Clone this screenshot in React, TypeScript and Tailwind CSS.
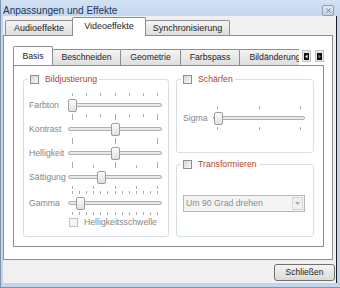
import React from "react";

function Checkbox({ disabled = false }: { disabled?: boolean }) {
  return (
    <span
      className={
        disabled
          ? "block h-[9px] w-[9px] shrink-0 border border-[#c2c2c2] bg-[#f7f7f7]"
          : "block h-[9px] w-[9px] shrink-0 border border-[#8e8f8f] bg-gradient-to-br from-[#d6d6d6] to-[#fafafa]"
      }
    />
  );
}

function Slider({
  widthClass,
  width,
  ticks,
  pos,
}: {
  widthClass: string;
  width: number;
  ticks: number;
  pos: number;
}) {
  const xs = Array.from({ length: ticks }, (_, i) =>
    Math.round(4 + ((width - 9) * i) / (ticks - 1))
  );
  return (
    <div className={`relative h-[24px] shrink-0 ${widthClass}`}>
      {xs.map((x, i) => (
        <span
          key={`a${i}`}
          className="absolute top-0 h-[3px] w-px bg-[#ababab]"
          style={{ left: x }}
        />
      ))}
      {xs.map((x, i) => (
        <span
          key={`b${i}`}
          className="absolute bottom-0 h-[3px] w-px bg-[#ababab]"
          style={{ left: x }}
        />
      ))}
      <div className="absolute left-0 right-0 top-[10px] h-[4px] rounded-full border border-[#b0b0b0] bg-[#e9e9e9]" />
      <div
        className="absolute top-[6px] h-[13px] w-[9px] rounded-[2px] border border-[#9c9c9c] bg-gradient-to-b from-[#fcfcfc] to-[#e1e1e1]"
        style={{ left: pos }}
      />
    </div>
  );
}

function Group({
  title,
  className,
  children,
}: {
  title: string;
  className: string;
  children?: React.ReactNode;
}) {
  return (
    <div className={`flex flex-col rounded-[3px] border border-[#d5dfe5] ${className}`}>
      <div className="-mt-[5px] ml-[4px] flex h-[9px] items-center gap-[6px] self-start bg-white px-[2px]">
        <Checkbox />
        <span className="text-[8.7px] leading-none text-[#b2432c]">{title}</span>
      </div>
      {children}
    </div>
  );
}

function SliderRow({
  label,
  ticks,
  pos,
  extra = "",
}: {
  label: string;
  ticks: number;
  pos: number;
  extra?: string;
}) {
  return (
    <div className={`flex h-[24px] items-center ${extra}`}>
      <span className="w-[39px] shrink-0 whitespace-nowrap text-[8.7px] leading-none text-[#868686]">
        {label}
      </span>
      <Slider widthClass="w-[94px]" width={94} ticks={ticks} pos={pos} />
    </div>
  );
}

function OuterTab({
  label,
  selected = false,
  className,
}: {
  label: string;
  selected?: boolean;
  className: string;
}) {
  return (
    <div
      className={
        selected
          ? `relative z-10 -mb-px flex h-[19px] items-center justify-center rounded-t-[2px] border border-b-0 border-[#8c8e94] bg-white pb-[1px] text-[9px] leading-none text-[#1e1e1e] ${className}`
          : `flex h-[15px] items-center justify-center rounded-t-[2px] border border-b-0 border-[#8c8e94] bg-gradient-to-b from-[#f4f4f4] to-[#dedede] text-[9px] leading-none text-[#1e1e1e] ${className}`
      }
    >
      {label}
    </div>
  );
}

function InnerTab({
  label,
  selected = false,
  className,
}: {
  label: string;
  selected?: boolean;
  className: string;
}) {
  return (
    <div
      className={
        selected
          ? `relative z-10 -mb-px flex h-[20px] shrink-0 items-center justify-center rounded-t-[2px] border border-b-0 border-[#8c8e94] bg-white text-[8.7px] leading-none text-[#1e1e1e] ${className}`
          : `flex h-[16px] shrink-0 items-center justify-center whitespace-nowrap rounded-t-[2px] border border-b-0 border-[#8c8e94] bg-gradient-to-b from-[#f4f4f4] to-[#dedede] text-[8.7px] leading-none text-[#1e1e1e] ${className}`
      }
    >
      {label}
    </div>
  );
}

function ScrollButton({ dir }: { dir: "left" | "right" }) {
  return (
    <div className="flex h-[12px] w-[9px] items-center justify-center border border-[#c4c4c4] bg-[#e6e6e6]">
      <svg width="5" height="7" viewBox="0 0 5 7">
        <rect x="0" y="0" width="5" height="7" fill="#111" />
        {dir === "left" ? (
          <polygon points="3.5,1.5 1.2,3.5 3.5,5.5" fill="#ffffff" />
        ) : (
          <polygon points="1.5,1.5 3.8,3.5 1.5,5.5" fill="#5b7fc0" />
        )}
      </svg>
    </div>
  );
}

export default function App() {
  return (
    <div className="flex h-[288px] w-[340px] flex-col overflow-hidden border-l border-[#7f93ad] bg-[#c2d5ed] font-['Liberation_Sans',Arial,sans-serif]">
      {/* Title bar */}
      <div className="flex h-[16px] shrink-0 items-start justify-between bg-gradient-to-b from-[#d2e1f3] to-[#c4d7ee]">
        <span className="ml-[2px] mt-[6px] whitespace-nowrap text-[10px] leading-none text-[#1d3461]">
          Anpassungen und Effekte
        </span>
        <div className="mr-[6px] mt-[5px] flex h-[11px] w-[12px] items-center justify-center rounded-[2px] border border-[#8d9ab1] bg-gradient-to-b from-[#e4e9f2] to-[#c3cddd]">
          <svg width="5" height="5" viewBox="0 0 5 5">
            <path d="M0.5 0.5 L4.5 4.5 M4.5 0.5 L0.5 4.5" stroke="#6b76a0" strokeWidth="1" />
          </svg>
        </div>
      </div>

      {/* Body */}
      <div className="flex h-[267px] shrink-0">
        <div className="w-[2px] shrink-0 bg-[#c2d5ed]" />
        <div className="flex w-[333px] shrink-0 flex-col bg-[#f0f0f0]">
          {/* Outer tabs */}
          <div className="ml-[2px] flex h-[19px] shrink-0 items-end">
            <OuterTab label="Audioeffekte" className="w-[68px]" />
            <OuterTab label="Videoeffekte" selected className="-ml-px w-[74px]" />
            <OuterTab label="Synchronisierung" className="-ml-px w-[85px]" />
          </div>

          {/* Outer pane */}
          <div className="flex h-[225px] w-[330px] shrink-0 flex-col border border-[#8c8e94] bg-white pl-[9px] pt-[10px]">
            {/* Inner tab bar */}
            <div className="flex h-[19px] w-[311px] shrink-0 items-end">
              <div className="flex h-[20px] w-[286px] shrink-0 items-end overflow-hidden">
                <InnerTab label="Basis" selected className="w-[40px]" />
                <InnerTab label="Beschneiden" className="-ml-px w-[69px]" />
                <InnerTab label="Geometrie" className="-ml-px w-[61px]" />
                <InnerTab label="Farbspass" className="-ml-px w-[60px]" />
                <InnerTab label="Bildänderung" className="-ml-px w-[72px]" />
              </div>
              <div className="mb-[3px] ml-[3px] flex gap-[4px]">
                <ScrollButton dir="left" />
                <ScrollButton dir="right" />
              </div>
            </div>

            {/* Inner pane */}
            <div className="flex h-[182px] w-[311px] shrink-0 gap-[7px] border border-[#8c8e94] bg-white pb-[9px] pl-[9px] pt-[13px]">
              {/* Left group */}
              <Group title="Bildjustierung" className="w-[146px]">
                <div className="mt-[9px] flex flex-col pl-[5px]">
                  <SliderRow label="Farbton" ticks={7} pos={0} />
                  <SliderRow label="Kontrast" ticks={3} pos={43} />
                  <SliderRow label="Helligkeit" ticks={3} pos={43} />
                  <SliderRow label="Sättigung" ticks={5} pos={29} />
                  <SliderRow label="Gamma" ticks={13} pos={8} extra="mt-[2px]" />
                  <div className="mt-[2px] flex h-[10px] items-center gap-[6px] pl-[40px]">
                    <Checkbox disabled />
                    <span className="whitespace-nowrap text-[8.7px] leading-none text-[#868686]">
                      Helligkeitsschwelle
                    </span>
                  </div>
                </div>
              </Group>

              {/* Right column */}
              <div className="flex w-[138px] flex-col gap-[11px]">
                <Group title="Schärfen" className="h-[74px]">
                  <div className="mt-[22px] flex h-[24px] items-center pl-[6px]">
                    <span className="w-[30px] shrink-0 text-[8.7px] leading-none text-[#868686]">Sigma</span>
                    <Slider widthClass="w-[92px]" width={92} ticks={3} pos={1} />
                  </div>
                </Group>
                <Group title="Transformieren" className="flex-1">
                  <div className="ml-[6px] mt-[26px] flex h-[17px] w-[122px] items-center border border-[#b3b8bf] bg-[#f4f4f4]">
                    <span className="flex-1 whitespace-nowrap pl-[2px] text-[8.7px] leading-none text-[#8d8d8d]">
                      Um 90 Grad drehen
                    </span>
                    <div className="mr-[1px] flex h-[13px] w-[11px] items-center justify-center border border-[#d6d6d6] bg-[#efefef]">
                      <svg width="5" height="3" viewBox="0 0 5 3">
                        <polygon points="0,0 5,0 2.5,3" fill="#a9a9a9" />
                      </svg>
                    </div>
                  </div>
                </Group>
              </div>
            </div>
          </div>

          {/* Bottom bar */}
          <div className="flex flex-1 items-start justify-end pr-[1px] pt-[4px]">
            <div className="flex h-[17px] w-[61px] items-center justify-center rounded-[3px] border border-[#707070] bg-gradient-to-b from-[#f4f4f4] to-[#dadada] text-[8.5px] leading-none text-[#1e1e1e]">
              Schließen
            </div>
          </div>
        </div>
        <div className="w-px shrink-0 bg-[#1b1b1b]" />
        <div className="w-[3px] shrink-0 bg-[#c2d5ed]" />
      </div>

      {/* Bottom frame */}
      <div className="h-[5px] shrink-0 border-b border-[#7f93ad] bg-[#c2d5ed]" />
    </div>
  );
}
